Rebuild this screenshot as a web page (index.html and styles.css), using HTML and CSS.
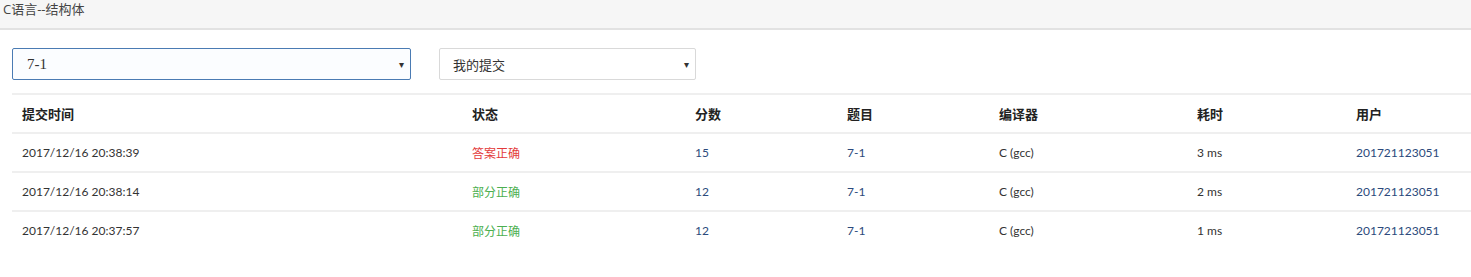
FILE: index.html
```html
<!DOCTYPE html>
<html lang="zh-CN">
<head>
    <meta charset="UTF-8">
    <title>C语言--结构体</title>
    <link rel="stylesheet" href="styles.css">
</head>
<body>
    <div class="page-header">C语言--结构体</div>

    <div class="filters">
        <div class="select select-active">
            <span class="select-text mono">7-1</span>
            <span class="caret">&#9662;</span>
        </div>
        <div class="select select-small">
            <span class="select-text">我的提交</span>
            <span class="caret">&#9662;</span>
        </div>
    </div>

    <table class="submissions">
        <colgroup>
            <col class="c-time">
            <col class="c-status">
            <col class="c-score">
            <col class="c-problem">
            <col class="c-compiler">
            <col class="c-cost">
            <col class="c-user">
        </colgroup>
        <thead>
            <tr>
                <th>提交时间</th>
                <th>状态</th>
                <th>分数</th>
                <th>题目</th>
                <th>编译器</th>
                <th>耗时</th>
                <th>用户</th>
            </tr>
        </thead>
        <tbody>
            <tr>
                <td>2017/12/16 20:38:39</td>
                <td class="accepted">答案正确</td>
                <td class="link">15</td>
                <td class="link">7-1</td>
                <td>C (gcc)</td>
                <td>3 ms</td>
                <td class="link">201721123051</td>
            </tr>
            <tr>
                <td>2017/12/16 20:38:14</td>
                <td class="partial">部分正确</td>
                <td class="link">12</td>
                <td class="link">7-1</td>
                <td>C (gcc)</td>
                <td>2 ms</td>
                <td class="link">201721123051</td>
            </tr>
            <tr>
                <td>2017/12/16 20:37:57</td>
                <td class="partial">部分正确</td>
                <td class="link">12</td>
                <td class="link">7-1</td>
                <td>C (gcc)</td>
                <td>1 ms</td>
                <td class="link">201721123051</td>
            </tr>
        </tbody>
    </table>
</body>
</html>
```

FILE: styles.css
```css
body {
    margin: 0;
    font-family: Lato, "Noto Sans CJK SC", sans-serif;
    font-size: 12px;
    color: #333;
    background-color: white;
    overflow: hidden;
}
.page-header {
    height: 28px;
    line-height: 18px;
    padding: 0 0 0 3px;
    background-color: #f6f6f6;
    border-bottom: 2px solid #e2e2e2;
    color: #444;
    font-family: "Open Sans", "Noto Sans CJK SC", sans-serif;
    font-size: 13px;
}
.filters {
    display: flex;
    gap: 28px;
    padding: 18px 0 0 12px;
}
.select {
    box-sizing: border-box;
    width: 399px;
    height: 32px;
    display: flex;
    align-items: center;
    justify-content: space-between;
    padding: 0 6px 0 14px;
    border: 1px solid #d9d9d9;
    border-radius: 2px;
    background-color: white;
}
.select-active {
    border-color: #4a7bb3;
    background-color: #fbfdff;
}
.select-small {
    width: 257px;
    padding-left: 13px;
}
.select-text {
    font-size: 13px;
    color: #333;
}
.mono {
    font-family: "Liberation Serif", "Noto Sans CJK SC", serif;
    font-size: 15px;
}
.caret {
    font-size: 10px;
    color: #333;
}
.submissions {
    margin: 13px 0 0 12px;
    width: 1480px;
    border-collapse: collapse;
    table-layout: fixed;
}
.c-time { width: 450px; }
.c-status { width: 223px; }
.c-score { width: 152px; }
.c-problem { width: 152px; }
.c-compiler { width: 198px; }
.c-cost { width: 159px; }
.submissions th,
.submissions td {
    height: 37px;
    padding: 0 10px;
    text-align: left;
    vertical-align: middle;
    border-top: 2px solid #efefef;
}
.submissions th {
    font-size: 13px;
    font-weight: bold;
    color: #222;
}
.submissions td {
    color: #333;
}
.submissions td.link {
    color: #2c4a7c;
}
.submissions td.accepted {
    color: #e33a3a;
}
.submissions td.partial {
    color: #4caf50;
}
```
